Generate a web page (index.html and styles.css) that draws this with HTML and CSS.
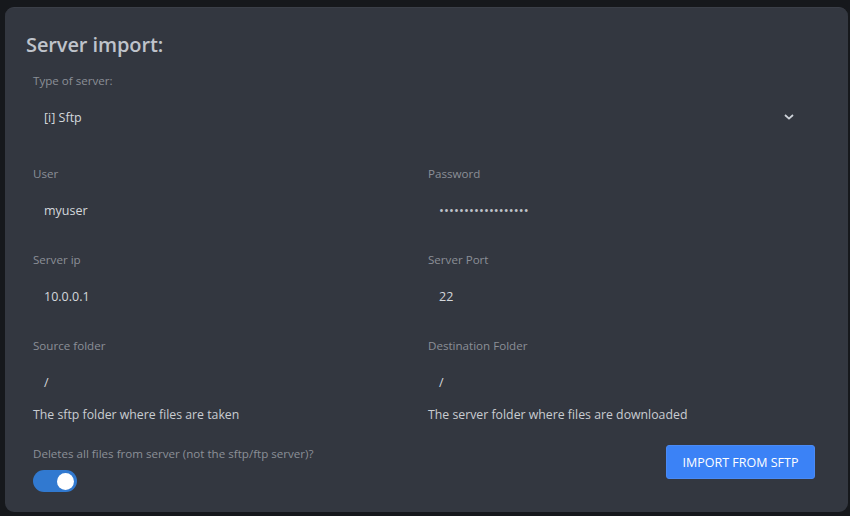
FILE: index.html
```html
<!DOCTYPE html>
<html>
<head>
<meta charset="utf-8">
<link rel="stylesheet" href="styles.css">
</head>
<body>
<div class="card">
  <h2 class="title">Server import:</h2>
  <div class="form">
    <div class="field full select-field">
      <label class="label">Type of server:</label>
      <div class="select">
        <span class="value">[i] Sftp</span>
        <svg class="chev" width="10" height="6" viewBox="0 0 10 6"><path d="M1 1l4 3.6L9 1" fill="none" stroke="#cfd3da" stroke-width="1.8"/></svg>
      </div>
    </div>
    <div class="field">
      <label class="label">User</label>
      <div class="input"><span class="value">myuser</span></div>
    </div>
    <div class="field">
      <label class="label">Password</label>
      <div class="input"><span class="value dots">••••••••••••••••••</span></div>
    </div>
    <div class="field">
      <label class="label">Server ip</label>
      <div class="input"><span class="value">10.0.0.1</span></div>
    </div>
    <div class="field">
      <label class="label">Server Port</label>
      <div class="input"><span class="value">22</span></div>
    </div>
    <div class="field">
      <label class="label">Source folder</label>
      <div class="input"><span class="value">/</span></div>
      <div class="help">The sftp folder where files are taken</div>
    </div>
    <div class="field">
      <label class="label">Destination Folder</label>
      <div class="input"><span class="value">/</span></div>
      <div class="help">The server folder where files are downloaded</div>
    </div>
  </div>
  <div class="footer">
    <div class="toggle-field">
      <label class="label">Deletes all files from server (not the sftp/ftp server)?</label>
      <div class="toggle"><span class="knob"></span></div>
    </div>
    <button class="btn">IMPORT FROM SFTP</button>
  </div>
</div>
</body>
</html>
```

FILE: styles.css
```css
* { box-sizing: border-box; }
html, body { margin: 0; padding: 0; }
body {
  background: #16181c;
  font-family: "Open Sans", "Noto Sans", sans-serif;
  width: 850px;
  height: 516px;
  overflow: hidden;
}
.card {
  margin: 7px 2px 0 5px;
  height: 505px;
  background: #333740;
  border-radius: 9px;
  border-top: 1px solid #3b3f48;
  padding: 23px 33px 0 21px;
}
.title {
  margin: 0;
  font-size: 20px;
  line-height: 28px;
  font-weight: 600;
  color: #bfc3cb;
  letter-spacing: -0.1px;
}
.form {
  margin-top: 14px;
  padding-left: 7px;
  display: grid;
  grid-template-columns: 1fr 1fr;
  column-gap: 8px;
  row-gap: 22px;
}
.field { display: flex; flex-direction: column; }
.full { grid-column: 1 / span 2; }
.select-field { margin-bottom: 7px; }
.label {
  font-size: 11.6px;
  line-height: 16px;
  color: #8b8f97;
}
.input, .select {
  height: 40px;
  margin-top: 8px;
  display: flex;
  align-items: center;
  padding: 0 11px;
}
.select { justify-content: space-between; padding-right: 21px; }
.value {
  font-size: 12.5px;
  color: #d4d7dc;
}
.dots { letter-spacing: 0.1px; font-size: 13px; color: #c0c4cb; }
.help {
  margin-top: 4px;
  font-size: 12.3px;
  line-height: 18px;
  color: #c9ccd1;
}
.footer {
  margin-top: 22px;
  padding-left: 7px;
  display: flex;
  justify-content: space-between;
  align-items: flex-start;
}
.toggle-field { display: flex; flex-direction: column; }
.toggle {
  margin-top: 8px;
  width: 44px;
  height: 22px;
  border-radius: 11px;
  background: #3179d0;
  display: flex;
  align-items: center;
  justify-content: flex-end;
  padding-right: 3px;
}
.knob {
  width: 17px;
  height: 17px;
  border-radius: 50%;
  background: #ffffff;
}
.btn {
  margin-top: -1px;
  width: 149px;
  height: 34px;
  border: 1px solid #4a8af5;
  border-radius: 3px;
  background: #3b82f6;
  color: #ffffff;
  font-family: inherit;
  font-size: 12.5px;
  padding: 0;
}
```
